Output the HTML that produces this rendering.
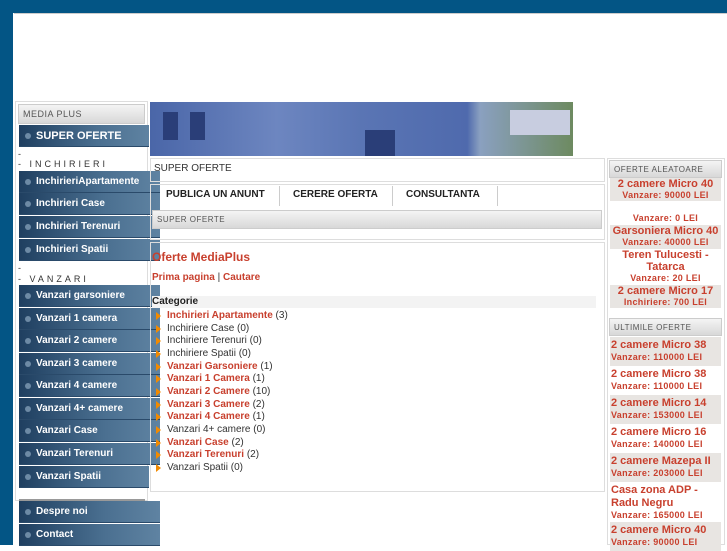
<!DOCTYPE html>
<html><head><meta charset="utf-8"><style>
*{margin:0;padding:0;box-sizing:border-box}
body{width:727px;height:545px;overflow:hidden;background:#fff;font-family:"Liberation Sans",sans-serif;position:relative}
.a{position:absolute}
.btn{position:absolute;left:19px;height:22px;background:linear-gradient(90deg,#1f3f60,#4a6f90 60%,#5f83a2);color:#fff;font-weight:bold;font-size:10px;line-height:22px;padding-left:17px;border-bottom:1px solid #2a4a6a}
.btn:before{content:"";position:absolute;left:6px;top:8px;width:6px;height:6px;border-radius:50%;background:#6d8aa5}
.hdr{position:absolute;background:linear-gradient(#f4f4f4,#d8d8d8);border:1px solid #ccc;color:#555;font-size:9px;letter-spacing:.5px;padding-left:4px}
.lbl{position:absolute;left:18px;font-size:9px;color:#333;letter-spacing:3px}
.cat{position:absolute;left:153px;font-size:10px;color:#333;line-height:12px;padding-left:14px}
.cat:before{content:"";position:absolute;left:3px;top:2px;border-left:5px solid #f28a00;border-top:4px solid transparent;border-bottom:4px solid transparent}
.cat b{color:#c8402e}
.r{position:absolute;left:610px;width:111px;color:#c8402e;font-weight:bold;text-align:center}
.r .t{font-size:11px;line-height:12px}.r .s{font-size:9px;line-height:11px;letter-spacing:.3px}
.u{position:absolute;left:610px;width:111px;color:#c8402e;font-weight:bold;padding-left:1px;height:29px}
.u .t{font-size:11px;line-height:13px;padding-top:2px}.u .s{font-size:9px;line-height:11px;letter-spacing:.3px}
.g{background:#e8e5e2}
</style></head><body>
<div class="a" style="left:0;top:0;width:727px;height:13px;background:#035585"></div>
<div class="a" style="left:0;top:0;width:13px;height:545px;background:#035585"></div>
<div class="a" style="left:14px;top:13px;width:713px;height:1px;background:#ccc"></div>

<div class="a" style="left:15px;top:101px;width:133px;height:400px;border:1px solid #ddd"></div>
<div class="hdr" style="left:18px;top:104px;width:127px;height:20px;line-height:19px">MEDIA PLUS</div>
<div class="btn" style="top:125px;width:130px;font-size:11px;color:#fff">SUPER OFERTE</div>
<div class="lbl" style="top:149px">-</div>
<div class="lbl" style="top:159px">- INCHIRIERI</div>
<div class="btn" style="top:171px;width:141px">InchirieriApartamente</div>
<div class="btn" style="top:193px;width:141px">Inchirieri Case</div>
<div class="btn" style="top:216px;width:141px">Inchirieri Terenuri</div>
<div class="btn" style="top:239px;width:141px">Inchirieri Spatii</div>
<div class="lbl" style="top:263px">-</div>
<div class="lbl" style="top:274px">- VANZARI</div>
<div class="btn" style="top:285px;width:141px">Vanzari garsoniere</div>
<div class="btn" style="top:308px;width:141px">Vanzari 1 camera</div>
<div class="btn" style="top:330px;width:141px">Vanzari 2 camere</div>
<div class="btn" style="top:353px;width:141px">Vanzari 3 camere</div>
<div class="btn" style="top:375px;width:141px">Vanzari 4 camere</div>
<div class="btn" style="top:398px;width:141px">Vanzari 4+ camere</div>
<div class="btn" style="top:420px;width:141px">Vanzari Case</div>
<div class="btn" style="top:443px;width:141px">Vanzari Terenuri</div>
<div class="btn" style="top:466px;width:130px">Vanzari Spatii</div>
<div class="a" style="left:19px;top:499px;width:126px;height:2px;background:#999"></div>
<div class="btn" style="top:501px;width:141px">Despre noi</div>
<div class="btn" style="top:524px;width:141px">Contact</div>

<div class="a" style="left:150px;top:102px;width:423px;height:54px;background:linear-gradient(90deg,#4a66a8,#6d86c0 30%,#5a75b4 50%,#4f6aad 75%,#8aa0c0 78%,#6d8a60 100%)"></div>
<div class="a" style="left:163px;top:112px;width:15px;height:28px;background:#2a3e78"></div>
<div class="a" style="left:190px;top:112px;width:15px;height:28px;background:#2a3e78"></div>
<div class="a" style="left:365px;top:130px;width:30px;height:26px;background:#2a3e78"></div>
<div class="a" style="left:510px;top:110px;width:60px;height:25px;background:#c8cde0"></div>

<div class="a" style="left:150px;top:158px;width:455px;height:24px;border:1px solid #ddd;font-size:10px;color:#333;padding:4px 3px">SUPER OFERTE</div>
<div class="a" style="left:150px;top:184px;width:455px;height:56px;border:1px solid #ddd"></div>
<div class="a" style="left:166px;top:189px;font-size:10px;font-weight:bold;color:#222">PUBLICA UN ANUNT</div>
<div class="a" style="left:279px;top:186px;width:1px;height:20px;background:#ccc"></div>
<div class="a" style="left:293px;top:189px;font-size:10px;font-weight:bold;color:#222">CERERE OFERTA</div>
<div class="a" style="left:392px;top:186px;width:1px;height:20px;background:#ccc"></div>
<div class="a" style="left:406px;top:189px;font-size:10px;font-weight:bold;color:#222">CONSULTANTA</div>
<div class="a" style="left:497px;top:186px;width:1px;height:20px;background:#ccc"></div>
<div class="hdr" style="left:152px;top:210px;width:450px;height:19px;line-height:17px;font-size:8px">SUPER OFERTE</div>
<div class="a" style="left:150px;top:242px;width:455px;height:250px;border:1px solid #ddd"></div>
<div class="a" style="left:152px;top:250px;font-size:12px;font-weight:bold;color:#c8402e">Oferte MediaPlus</div>
<div class="a" style="left:152px;top:272px;font-size:10px;font-weight:bold;color:#c8402e">Prima pagina <span style="color:#333;font-weight:normal">|</span> Cautare</div>
<div class="a" style="left:152px;top:296px;width:444px;height:12px;background:#f3f3f3;font-size:10px;font-weight:bold;color:#222">Categorie</div>
<div class="cat" style="top:310px"><b>Inchirieri Apartamente</b> (3)</div>
<div class="cat" style="top:323px">Inchiriere Case (0)</div>
<div class="cat" style="top:335px">Inchiriere Terenuri (0)</div>
<div class="cat" style="top:348px">Inchiriere Spatii (0)</div>
<div class="cat" style="top:361px"><b>Vanzari Garsoniere</b> (1)</div>
<div class="cat" style="top:373px"><b>Vanzari 1 Camera</b> (1)</div>
<div class="cat" style="top:386px"><b>Vanzari 2 Camere</b> (10)</div>
<div class="cat" style="top:399px"><b>Vanzari 3 Camere</b> (2)</div>
<div class="cat" style="top:411px"><b>Vanzari 4 Camere</b> (1)</div>
<div class="cat" style="top:424px">Vanzari 4+ camere (0)</div>
<div class="cat" style="top:437px"><b>Vanzari Case</b> (2)</div>
<div class="cat" style="top:449px"><b>Vanzari Terenuri</b> (2)</div>
<div class="cat" style="top:462px">Vanzari Spatii (0)</div>

<div class="a" style="left:607px;top:158px;width:118px;height:387px;border:1px solid #ddd"></div>
<div class="hdr" style="left:609px;top:160px;width:113px;height:18px;line-height:17px;font-size:8px">OFERTE ALEATOARE</div>
<div class="r g" style="top:178px;height:23px"><div class="t">2 camere Micro 40</div><div class="s">Vanzare: 90000 LEI</div></div>
<div class="r" style="top:213px"><div class="s">Vanzare: 0 LEI</div></div>
<div class="r g" style="top:225px;height:24px"><div class="t">Garsoniera Micro 40</div><div class="s">Vanzare: 40000 LEI</div></div>
<div class="r" style="top:249px"><div class="t">Teren Tulucesti -<br>Tatarca</div><div class="s">Vanzare: 20 LEI</div></div>
<div class="r g" style="top:285px;height:23px"><div class="t">2 camere Micro 17</div><div class="s">Inchiriere: 700 LEI</div></div>
<div class="hdr" style="left:609px;top:318px;width:113px;height:18px;line-height:17px;font-size:8px">ULTIMILE OFERTE</div>
<div class="u g" style="top:337px"><div class="t">2 camere Micro 38</div><div class="s">Vanzare: 110000 LEI</div></div>
<div class="u" style="top:366px"><div class="t">2 camere Micro 38</div><div class="s">Vanzare: 110000 LEI</div></div>
<div class="u g" style="top:395px"><div class="t">2 camere Micro 14</div><div class="s">Vanzare: 153000 LEI</div></div>
<div class="u" style="top:424px"><div class="t">2 camere Micro 16</div><div class="s">Vanzare: 140000 LEI</div></div>
<div class="u g" style="top:453px"><div class="t">2 camere Mazepa II</div><div class="s">Vanzare: 203000 LEI</div></div>
<div class="u" style="top:482px;height:40px"><div class="t">Casa zona ADP -<br>Radu Negru</div><div class="s">Vanzare: 165000 LEI</div></div>
<div class="u g" style="top:522px"><div class="t">2 camere Micro 40</div><div class="s">Vanzare: 90000 LEI</div></div>
</body></html>
